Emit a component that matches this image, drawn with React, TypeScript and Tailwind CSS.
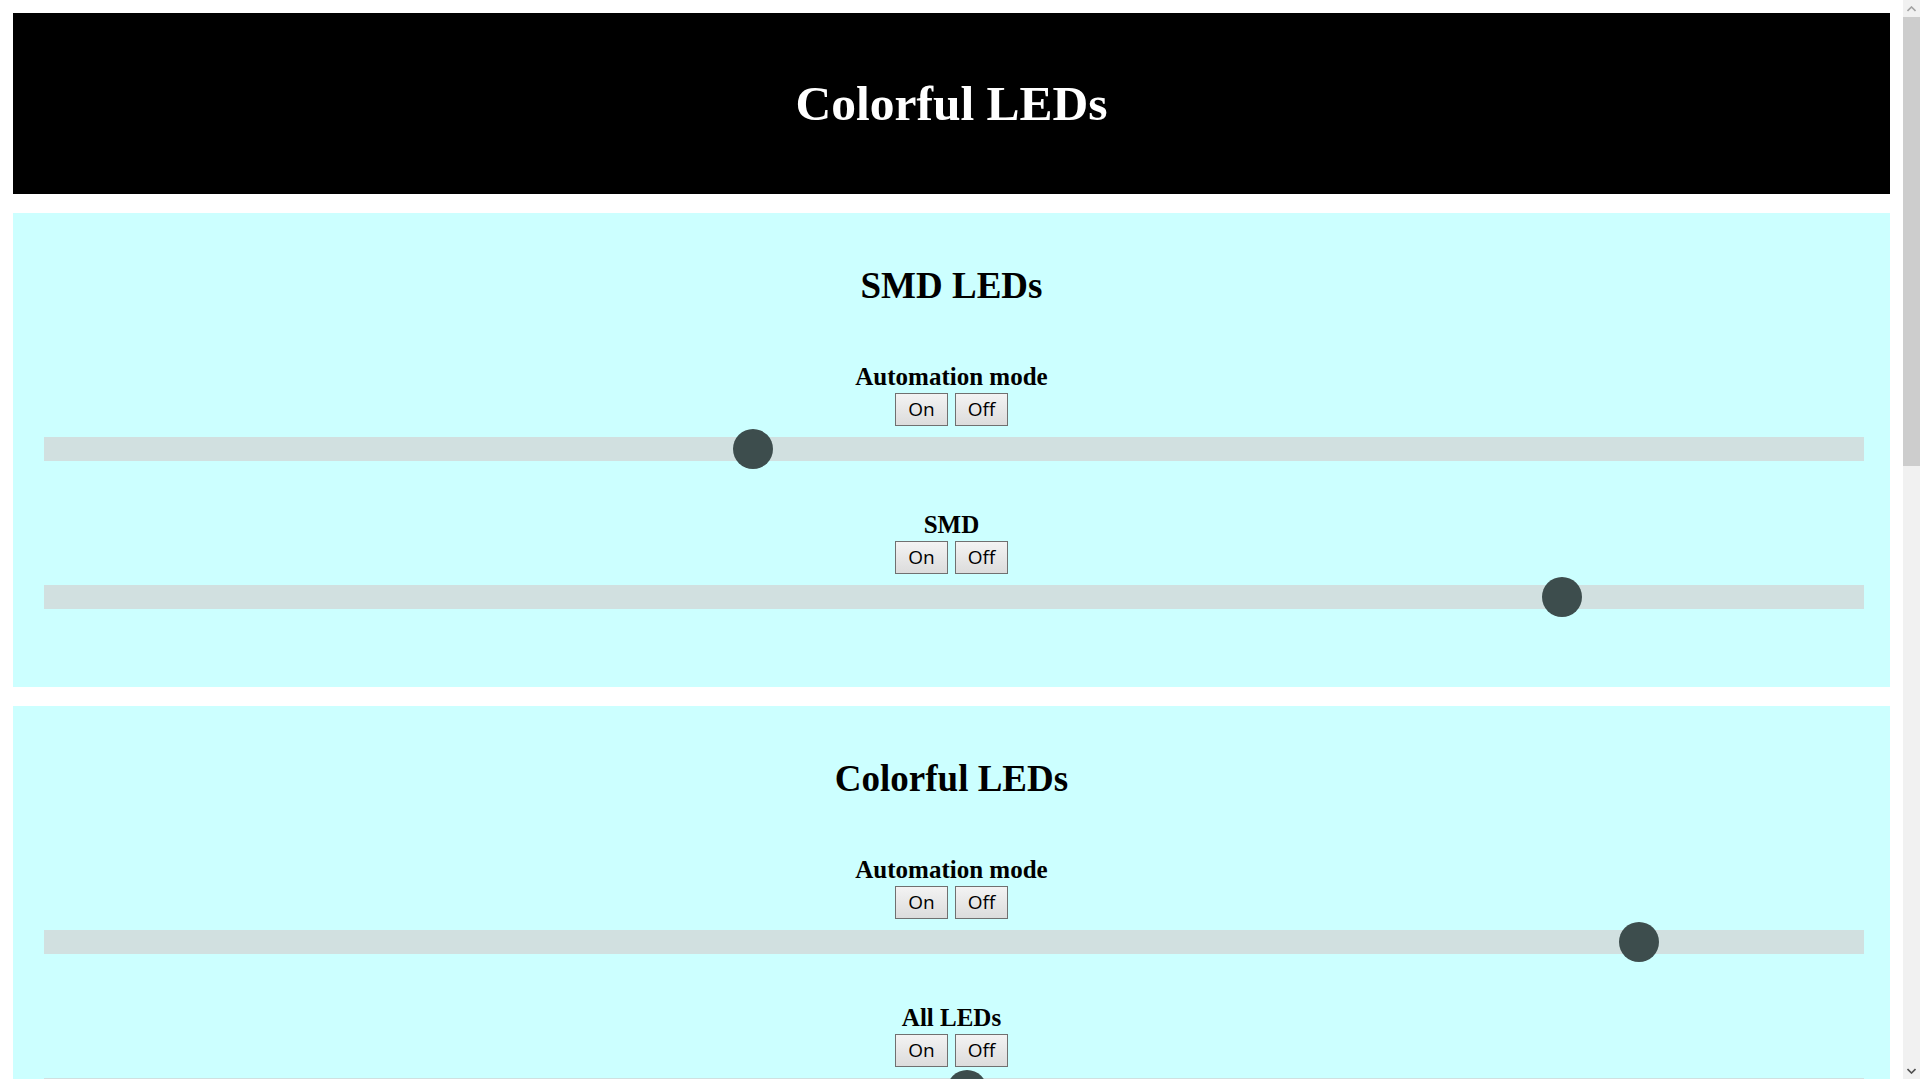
import React from "react";

type Control = { label: string; frac: number };
type Group = { title: string; controls: Control[] };

const groups: Group[] = [
  {
    title: "SMD LEDs",
    controls: [
      { label: "Automation mode", frac: 0.387 },
      { label: "SMD", frac: 0.8418 },
    ],
  },
  {
    title: "Colorful LEDs",
    controls: [
      { label: "Automation mode", frac: 0.8846 },
      { label: "All LEDs", frac: 0.5073 },
      { label: "Red", frac: 0.3 },
      { label: "Green", frac: 0.6 },
      { label: "Blue", frac: 0.45 },
      { label: "Yellow", frac: 0.2 },
      { label: "Orange", frac: 0.7 },
      { label: "Purple", frac: 0.5 },
      { label: "Pink", frac: 0.35 },
      { label: "White", frac: 0.8 },
      { label: "Rainbow", frac: 0.5 },
    ],
  },
];

function Btn({ children }: { children: React.ReactNode }) {
  return (
    <button
      type="button"
      className="flex h-[33px] w-[53px] items-center justify-center border border-[#707070] bg-gradient-to-b from-[#f3f3f3] to-[#dcdcdc] font-['Open_Sans','Liberation_Sans',Arial,sans-serif] text-[19px] leading-none text-black"
    >
      {children}
    </button>
  );
}

function ControlBlock({ c }: { c: Control }) {
  return (
    <div>
      <div className="text-center text-[25px] font-bold leading-[28px] text-black">{c.label}</div>
      <div className="mt-[2px] flex justify-center gap-[7px]">
        <Btn>On</Btn>
        <Btn>Off</Btn>
      </div>
      <div className="relative ml-[31px] mr-[26px] mt-[11px] h-[24px] bg-[#d1e0e0]">
        <div
          className="absolute top-1/2 h-[40px] w-[40px] -translate-x-1/2 -translate-y-1/2 rounded-full bg-[#3d4d4d]"
          style={{ left: `calc(20px + (100% - 40px) * ${c.frac})` }}
        />
      </div>
    </div>
  );
}

function FakeScrollbar() {
  return (
    <aside className="sticky top-0 flex h-screen w-[17px] shrink-0 flex-col self-start bg-[#f1f1f1]">
      <div className="flex h-[17px] items-center justify-center">
        <svg width="9" height="6" viewBox="0 0 9 6">
          <path d="M0.5 5 L4.5 1 L8.5 5" fill="none" stroke="#a3a3a3" strokeWidth="1.6" />
        </svg>
      </div>
      <div className="flex flex-1 flex-col">
        <div className="h-[449px] bg-[#cdcdcd]" />
      </div>
      <div className="flex h-[17px] items-center justify-center">
        <svg width="9" height="6" viewBox="0 0 9 6">
          <path d="M0.5 1 L4.5 5 L8.5 1" fill="none" stroke="#505050" strokeWidth="1.6" />
        </svg>
      </div>
    </aside>
  );
}

export default function App() {
  return (
    <div className="flex min-h-screen bg-white font-['Liberation_Serif','Times_New_Roman',serif]">
      <main className="min-w-0 flex-1 p-[13px]">
        <header className="flex h-[181px] items-center justify-center bg-black">
          <h1 className="text-[49.5px] font-bold leading-[54px] text-white">Colorful LEDs</h1>
        </header>
        {groups.map((g) => (
          <section key={g.title} className="mt-[19px] bg-[#ccffff] pb-[78px] pt-[52px]">
            <h2 className="text-center text-[37px] font-bold leading-[42px] text-black">{g.title}</h2>
            <div className="mt-[56px] flex flex-col gap-[50px]">
              {g.controls.map((c, i) => (
                <ControlBlock key={i} c={c} />
              ))}
            </div>
          </section>
        ))}
      </main>
      <FakeScrollbar />
    </div>
  );
}
